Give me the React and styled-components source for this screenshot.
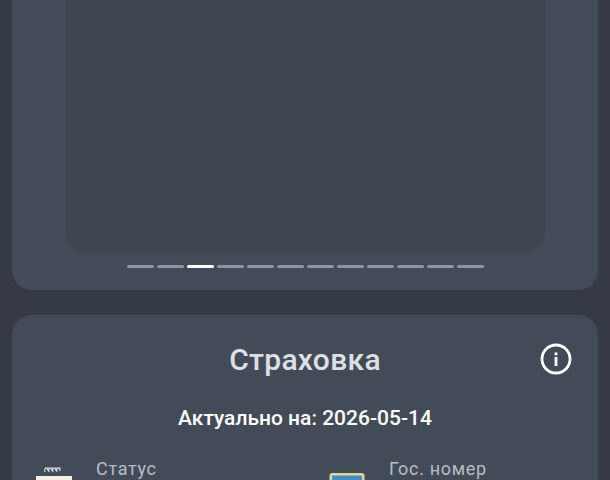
import React from 'react';
import styled, { createGlobalStyle } from 'styled-components';

const GlobalStyle = createGlobalStyle`
  html, body {
    margin: 0;
    padding: 0;
    height: 100%;
    background: #353a45;
    overflow: hidden;
  }
`

const Page = styled.div`
  box-sizing: border-box;
  width: 610px;
  height: 480px;
  padding: 0 12px;
  overflow: hidden;
  display: flex;
  flex-direction: column;
  gap: 25px;
  background: #353a45;
  font-family: Roboto, "Noto Sans", sans-serif;
`
const TopCard = styled.section`
  flex: none;
  height: 290px;
  padding: 0 53px 0 54px;
  box-sizing: border-box;
  background: #444b58;
  border-radius: 0 0 20px 20px;
  display: flex;
  flex-direction: column;
  align-items: stretch;
`
const Slide = styled.div`
  flex: none;
  height: 254px;
  background: #3f4652;
  border-radius: 0 0 24px 24px;
`
const Dots = styled.div`
  margin-top: 11px;
  display: flex;
  justify-content: center;
  gap: 3px;
`
const Dot = styled.span`
  width: 27px;
  height: 3px;
  border-radius: 1.5px;
  background: ${props => props.active ? '#ffffff' : '#8f949f'};
`
const InfoCard = styled.section`
  flex: none;
  height: 200px;
  padding: 26px 24px 0;
  box-sizing: border-box;
  background: #444b58;
  border-radius: 20px;
`
const Header = styled.div`
  position: relative;
  display: flex;
  justify-content: center;
  align-items: center;
  height: 38px;
`
const Title = styled.h2`
  margin: 0;
  font-size: 30px;
  font-weight: 500;
  line-height: 38px;
  letter-spacing: 0.3px;
  color: #dfe0e6;
`
const InfoButton = styled.span`
  position: absolute;
  right: 2px;
  top: 2px;
  width: 32px;
  height: 32px;
  color: #ffffff;
`
const Updated = styled.p`
  margin: 27px 0 0;
  text-align: center;
  font-size: 21px;
  font-weight: 500;
  line-height: 24px;
  color: #ffffff;
`
const Fields = styled.div`
  margin-top: 29px;
  display: grid;
  grid-template-columns: 293px 1fr;
`
const Field = styled.div`
  display: flex;
  align-items: flex-start;
  gap: 24px;
`
const FieldIcon = styled.svg`
  flex: none;
  width: 36px;
  height: 50px;
`
const Label = styled.span`
  font-size: 18px;
  line-height: 20px;
  letter-spacing: 0.7px;
  color: #b9bcc4;
`

const InfoIcon = () => (
  <svg viewBox="0 0 32 32" width="32" height="32" fill="none">
    <circle cx="16" cy="16" r="14" stroke="currentColor" strokeWidth="2.8" />
    <rect x="14.6" y="14" width="2.8" height="9" fill="currentColor" />
    <rect x="14.6" y="9.5" width="2.8" height="2.8" fill="currentColor" />
  </svg>
)

const NotepadIcon = () => (
  <FieldIcon viewBox="0 0 36 50">
    <path d="M9 13c-1.500-5 3-5 3-1M13 13c-1.500-5 3-5 3-1M17 13c-1.500-5 3-5 3-1M21 13c-1.500-5 3-5 3-1M9 9h16" stroke="#d6d8dc" strokeWidth="1.2" fill="none" />
    <rect x="0" y="17" width="36" height="33" fill="#f4efe2" />
  </FieldIcon>
)

const PlateIcon = () => (
  <FieldIcon viewBox="0 0 36 50">
    <rect x="0.500" y="14" width="35" height="36" rx="3" fill="#dcd79a" />
    <rect x="3" y="16.500" width="30" height="33.500" fill="#4a8dc0" />
  </FieldIcon>
)

const App = () => {
  const dots = Array.from({ length: 12 }, (_, i) => i);
  return (
    <Page>
      <GlobalStyle />
      <TopCard>
        <Slide />
        <Dots>
          {dots.map(i => <Dot key={i} active={i === 2} />)}
        </Dots>
      </TopCard>
      <InfoCard>
        <Header>
          <Title>Страховка</Title>
          <InfoButton><InfoIcon /></InfoButton>
        </Header>
        <Updated>Актуально на: 2026-05-14</Updated>
        <Fields>
          <Field>
            <NotepadIcon />
            <Label>Статус</Label>
          </Field>
          <Field>
            <PlateIcon />
            <Label>Гос. номер</Label>
          </Field>
        </Fields>
      </InfoCard>
    </Page>
  );
}

export default App;
